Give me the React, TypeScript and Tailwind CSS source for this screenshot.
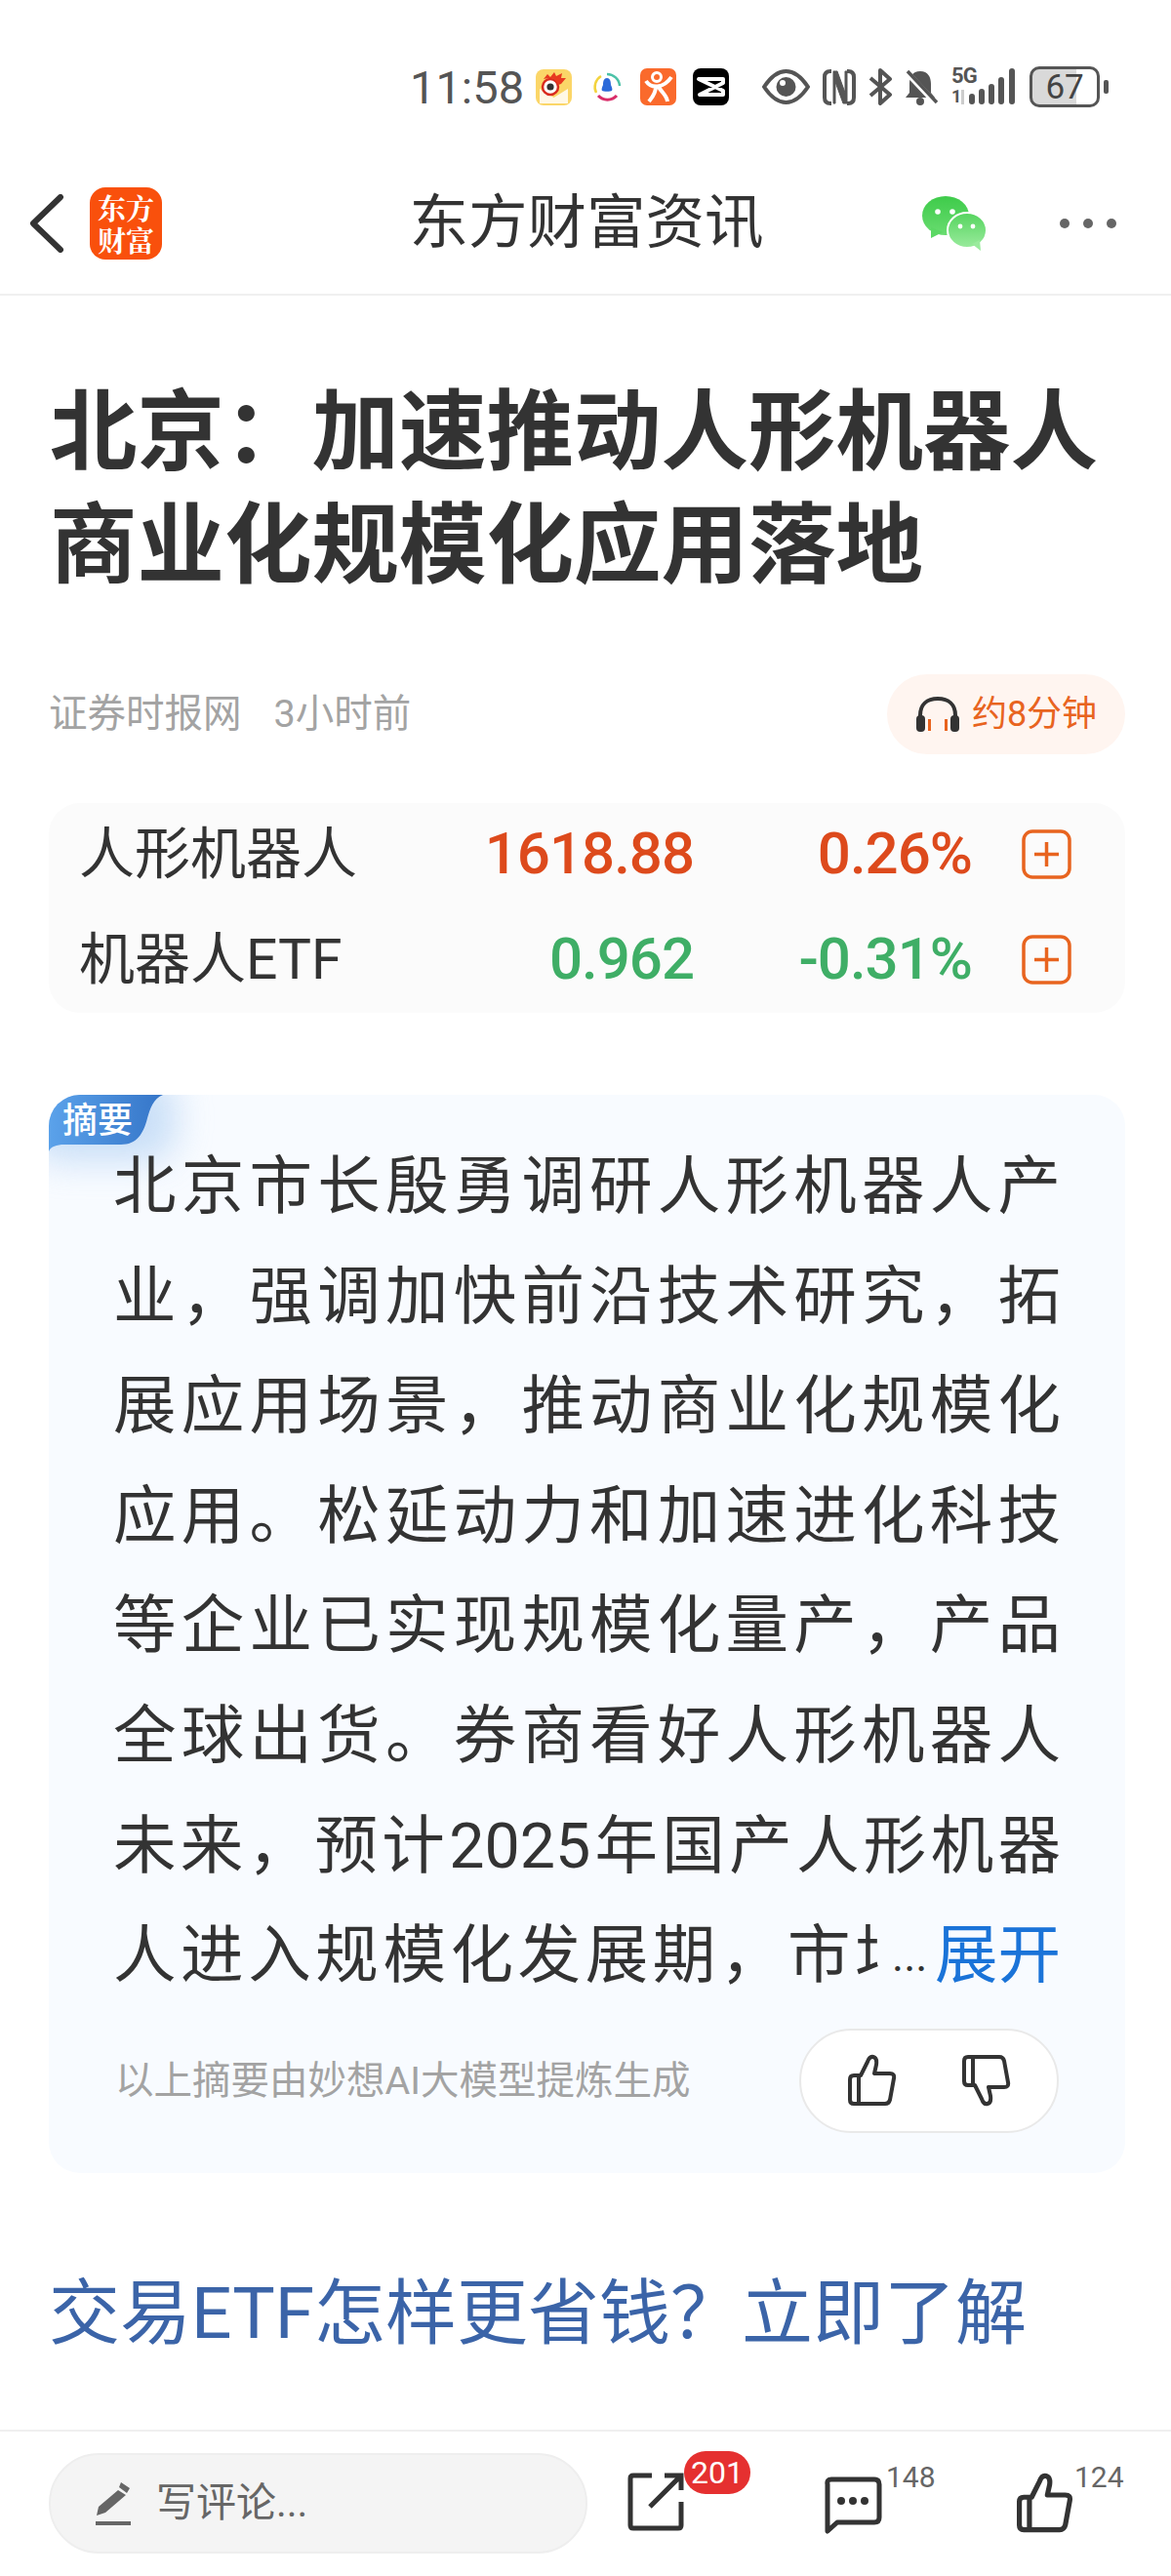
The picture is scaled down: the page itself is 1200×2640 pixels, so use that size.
import React from "react";

const Plus = () => (
  <svg width="51" height="51" viewBox="0 0 51 51" fill="none" className="shrink-0">
    <rect x="2" y="2" width="47" height="47" rx="9" stroke="#e8641f" strokeWidth="3.5" />
    <path d="M13 25.5H38M25.5 13V38" stroke="#e8641f" strokeWidth="3.5" />
  </svg>
);

const Thumb = ({ w, h, flip, sw = 4, color = "#333" }: { w: number; h: number; flip?: boolean; sw?: number; color?: string }) => (
  <svg width={w} height={h} viewBox="0 0 50 54" fill="none" className={flip ? "-scale-y-100" : ""}>
    <path
      d="M13 22 L20 8 Q22 2 26 3 Q30 4 29 11 L27 20 H43 Q48 20 47 25 L43 47 Q42 51 38 51 H6 Q2 51 2 47 V26 Q2 22 6 22 H13 Z M11 22 V51"
      stroke={color}
      strokeWidth={sw}
      strokeLinejoin="round"
    />
  </svg>
);

const StockRow = ({ name, price, pct, color }: { name: string; price: string; pct: string; color: string }) => (
  <div className="flex h-[104px] items-center">
    <div className="w-[300px] pl-[31px] text-[57px] leading-none whitespace-nowrap text-[#333]">{name}</div>
    <div className={`w-[361px] text-right text-[60px] leading-none font-medium tracking-[-1px] ${color}`}>{price}</div>
    <div className={`w-[285px] text-right text-[60px] leading-none font-medium tracking-[-1px] ${color}`}>{pct}</div>
    <div className="ml-[51px]"><Plus /></div>
  </div>
);

const StatusIcons = () => (
  <div className="flex items-center">
    <svg width="37" height="37" viewBox="0 0 37 37" className="ml-[12px]">
      <rect width="37" height="37" rx="8" fill="#fbd668" />
      <path d="M4 20L18.5 29L33 20V35H4Z" fill="#fff8e6" />
      <circle cx="15" cy="18" r="8" fill="#fff" stroke="#d92b1f" strokeWidth="2.5" />
      <circle cx="15" cy="18" r="3.6" fill="#333" />
      <path d="M8 10L12 5L15 8L19 3L21 7L27 4L26 9L31 9L26 15L23 16L19 10L13 9Z" fill="#e8391f" />
    </svg>
    <svg width="30" height="30" viewBox="0 0 30 30" fill="none" className="ml-[21px]">
      <path d="M9 4A13 13 0 0 0 4 21" stroke="#f3d33d" strokeWidth="2.5" />
      <path d="M15 2A13 13 0 0 1 28 14" stroke="#4cc2a8" strokeWidth="2.5" />
      <path d="M6 24A13 13 0 0 0 25 24" stroke="#d92e6a" strokeWidth="3" />
      <path d="M15 6C18 6 19 9 19 13C20 15 21 18 20 19C19 20 11 20 10 19C9 18 10 15 11 13C11 9 12 6 15 6Z" fill="#2b69d9" />
    </svg>
    <svg width="37" height="38" viewBox="0 0 37 38" fill="none" className="ml-[19px]">
      <rect width="37" height="38" rx="7" fill="#fa6a2c" />
      <circle cx="17" cy="9" r="4.5" stroke="#fff" strokeWidth="3" />
      <path d="M6 13C11 21 24 21 32 9M16 19C16 26 12 30 9 34M19 19C22 25 27 27 28 34" stroke="#fff" strokeWidth="4" />
    </svg>
    <svg width="37" height="38" viewBox="0 0 37 38" className="ml-[17px]">
      <rect width="37" height="38" rx="8" fill="#000" />
      <path d="M6 11H31V15L7 27H31V23L6 11Z" fill="none" stroke="#fff" strokeWidth="4" strokeLinejoin="round" />
    </svg>
    <svg width="49" height="36" viewBox="0 0 49 36" fill="none" className="ml-[34px]">
      <path d="M2 18C10 6 17 2 24.5 2C32 2 39 6 47 18C39 30 32 34 24.5 34C17 34 10 30 2 18Z" stroke="#555" strokeWidth="4" />
      <circle cx="24.5" cy="18" r="10" fill="#555" />
      <circle cx="21" cy="14" r="3" fill="#fff" />
    </svg>
    <svg width="34" height="37" viewBox="0 0 34 37" fill="none" className="ml-[13px]">
      <path d="M9 2H8Q2 2 2 8V29Q2 35 8 35H9M25 2H26Q32 2 32 8V29Q32 35 26 35H25" stroke="#555" strokeWidth="4" />
      <path d="M11 2H15L23 24V2H25V35H21L13 13V35H11Z" fill="#555" stroke="#555" strokeWidth="1" />
    </svg>
    <svg width="26" height="38" viewBox="0 0 26 38" fill="none" className="ml-[12px]">
      <path d="M3 10L23 27L13 36V2L23 11L3 28" stroke="#555" strokeWidth="4" strokeLinejoin="round" />
    </svg>
    <svg width="36" height="38" viewBox="0 0 36 38" className="ml-[10px]">
      <path d="M18 3C10 3 7 9 7 16V25L3 30H33L29 25V16C29 9 26 3 18 3Z" fill="#555" />
      <circle cx="18" cy="34" r="4" fill="#555" />
      <path d="M3 3L33 35" stroke="#fff" strokeWidth="6" />
      <path d="M5 3L35 35" stroke="#555" strokeWidth="3.5" />
    </svg>
    <div className="relative ml-[14px] h-[38px] w-[68px]">
      <span className="absolute top-[-3px] left-0 text-[22px] leading-[22px] font-bold tracking-[-1px] text-[#555]">5G</span>
      <span className="absolute top-[19px] left-0 text-[18px] leading-[20px] font-bold text-[#555]">1</span>
      <span className="absolute top-[22px] left-[10px] h-[15px] w-[3px] bg-[#ccc]" />
      <svg width="50" height="38" viewBox="0 0 50 38" fill="#555" className="absolute top-0 right-0">
        <rect x="0" y="26" width="6" height="11" rx="3" />
        <rect x="10" y="21" width="6" height="16" rx="3" />
        <rect x="20" y="16" width="6" height="21" rx="3" />
        <rect x="30" y="9" width="6" height="28" rx="3" />
        <rect x="41" y="0" width="6" height="37" rx="3" />
      </svg>
    </div>
    <div className="relative ml-[12px] flex h-[42px] w-[72px] items-center justify-center overflow-hidden rounded-[10px] border-[3px] border-[#555] bg-[linear-gradient(90deg,#d9d9d9_68%,#fff_68%)]">
      <span className="text-[35px] leading-none text-[#444]">67</span>
    </div>
    <div className="ml-[4px] h-[14px] w-[5px] rounded-[2px] bg-[#555]" />
  </div>
);

export default function App() {
  const lines = [
    "北京市长殷勇调研人形机器人产",
    "业，强调加快前沿技术研究，拓",
    "展应用场景，推动商业化规模化",
    "应用。松延动力和加速进化科技",
    "等企业已实现规模化量产，产品",
    "全球出货。券商看好人形机器人",
    "未来，预计2025年国产人形机器",
  ];
  return (
    <div className="flex h-[2640px] w-[1200px] flex-col overflow-hidden bg-white text-[#333] [font-family:Roboto,'Noto_Sans_CJK_SC',sans-serif]">
      <div className="flex h-[178px] shrink-0 items-center pl-[420px]">
        <span className="text-[47px] leading-none text-[#555]">11:58</span>
        <StatusIcons />
      </div>

      <header className="relative flex h-[125px] shrink-0 items-start border-b-[2px] border-[#f0f0f0] pl-[30px]">
        <div className="flex h-[102px] w-full items-center">
          <svg width="36" height="60" viewBox="0 0 36 60" fill="none">
            <path d="M32 3L4 30L32 57" stroke="#333" strokeWidth="6" strokeLinecap="round" strokeLinejoin="round" />
          </svg>
          <div className="ml-[26px] flex h-[74px] w-[74px] flex-col items-center justify-center rounded-[16px] bg-[#f9500c] text-[29px] leading-[33px] font-bold text-white [font-family:'Noto_Serif_CJK_SC','Noto_Sans_CJK_SC',serif]">
            <span>东方</span>
            <span>财富</span>
          </div>
          <h1 className="ml-[253px] w-[364px] text-center text-[60.5px] leading-none font-normal whitespace-nowrap text-[#333]">东方财富资讯</h1>
          <svg width="68" height="58" viewBox="0 0 68 58" className="ml-[161px]">
            <defs>
              <linearGradient id="wa" x1="0" y1="0" x2="0" y2="1"><stop offset="0" stopColor="#3ecb4a" /><stop offset="1" stopColor="#69dc70" /></linearGradient>
              <linearGradient id="wb" x1="0" y1="0" x2="0" y2="1"><stop offset="0" stopColor="#55d45e" /><stop offset="1" stopColor="#9aeb9d" /></linearGradient>
            </defs>
            <ellipse cx="25" cy="21" rx="24" ry="20" fill="url(#wa)" />
            <path d="M10 33L10 44L22 38Z" fill="#5bd864" />
            <ellipse cx="47" cy="36" rx="20" ry="18" fill="url(#wb)" stroke="#fff" strokeWidth="2" />
            <path d="M52 50L61 57L60 46Z" fill="#9aeb9d" />
            <circle cx="17" cy="17" r="2.8" fill="#fff" />
            <circle cx="32" cy="17" r="2.8" fill="#fff" />
            <circle cx="40" cy="32" r="2.4" fill="#fff" />
            <circle cx="53" cy="32" r="2.4" fill="#fff" />
          </svg>
          <div className="ml-[74px] flex gap-[14px]">
            <span className="h-[10px] w-[10px] rounded-full bg-[#666]" />
            <span className="h-[10px] w-[10px] rounded-full bg-[#666]" />
            <span className="h-[10px] w-[10px] rounded-full bg-[#666]" />
          </div>
        </div>
      </header>

      <main className="flex flex-1 flex-col">
        <div className="pt-[83px] pl-[51px] text-[89.5px] leading-[116px] font-bold whitespace-nowrap text-[#333]">
          <div>北京：加速推动人形机器人</div>
          <div>商业化规模化应用落地</div>
        </div>

        <div className="mt-[73px] flex h-[82px] items-center justify-between pr-[47px] pl-[50px]">
          <div className="flex gap-[33px] text-[39.5px] leading-none text-[#a3a3a3]">
            <span>证券时报网</span>
            <span>3小时前</span>
          </div>
          <div className="flex h-[82px] w-[244px] items-center justify-center gap-[12px] rounded-[41px] bg-[#fff5f0]">
            <svg width="46" height="38" viewBox="0 0 46 38" fill="none">
              <path d="M5 30V20C5 9 12 3 23 3C34 3 41 9 41 20V30" stroke="#333" strokeWidth="4" />
              <rect x="1" y="20" width="9" height="17" rx="4" fill="#333" />
              <rect x="36" y="20" width="9" height="17" rx="4" fill="#333" />
              <rect x="13" y="24" width="3" height="12" fill="#e8641f" />
              <rect x="30" y="24" width="3" height="12" fill="#e8641f" />
            </svg>
            <span className="text-[36px] leading-none text-[#e8641f]">约8分钟</span>
          </div>
        </div>

        <div className="mx-[50px] mt-[50px] h-[215px] w-[1103px] rounded-[32px] bg-[#fbfbfb]">
          <div className="flex flex-col gap-[4px]">
            <StockRow name="人形机器人" price="1618.88" pct="0.26%" color="text-[#dd4a1c]" />
            <StockRow name="机器人ETF" price="0.962" pct="-0.31%" color="text-[#3fae66]" />
          </div>
        </div>

        <section className="relative mx-[50px] mt-[84px] w-[1103px] overflow-hidden rounded-[32px] bg-[#f8fbff] pt-[38px] pr-[66px] pb-[41px] pl-[66px]">
          <div className="absolute top-[-20px] left-[-20px] h-[88px] w-[150px] rounded-[30px] bg-[#a9ccf2] opacity-60 blur-[18px]" />
          <svg width="118" height="58" viewBox="0 0 118 58" className="absolute top-0 left-0">
            <defs>
              <linearGradient id="tag" x1="0" y1="0" x2="1" y2="0"><stop offset="0" stopColor="#5ba2ea" /><stop offset="1" stopColor="#3575c8" /></linearGradient>
            </defs>
            <path d="M0 30C0 12 12 0 30 0H117C107 4 104 14 101 24C97 40 90 51 74 51H16C8 51 2 53 0 58Z" fill="url(#tag)" />
          </svg>
          <span className="absolute top-[7px] left-[14px] text-[36px] leading-[40px] font-medium text-white">摘要</span>

          <div className="relative text-[64.5px] leading-[112.6px] text-[#333]">
            {lines.map((l) => (
              <div key={l} className="whitespace-nowrap [text-align-last:justify]">{l}</div>
            ))}
            <div className="flex items-center whitespace-nowrap">
              <div className="w-[784px] overflow-hidden tracking-[4.6px]">人进入规模化发展期，市场</div>
              <span className="ml-[14px] w-[38px] text-[46px] leading-none">...</span>
              <span className="ml-auto text-[#1a73d8]">展开</span>
            </div>
          </div>

          <div className="relative mt-[18px] flex items-center justify-between pl-[2px] pr-[2px]">
            <span className="text-[39.5px] leading-none whitespace-nowrap text-[#a3a3a3]">以上摘要由妙想AI大模型提炼生成</span>
            <div className="flex h-[107px] w-[266px] shrink-0 items-center justify-center gap-[67px] rounded-[54px] border-[2px] border-[#e9e9e9] bg-white">
              <Thumb w={50} h={54} />
              <Thumb w={50} h={54} flip />
            </div>
          </div>
        </section>

        <div className="mt-[94px] px-[50px] text-[73px] leading-[100px] whitespace-nowrap text-[#3b64a8]">交易ETF怎样更省钱？立即了解</div>
      </main>

      <footer className="flex h-[150px] shrink-0 items-start border-t-[2px] border-[#efefef] pt-[22px] pl-[50px]">
        <div className="flex h-[103px] w-[552px] items-center rounded-[52px] border-[2px] border-[#eeeeee] bg-[#f4f4f4] pl-[46px]">
          <svg width="36" height="46" viewBox="0 0 36 46" fill="#666">
            <path d="M26 1L35 7L32 12L24 6ZM23 9L31 14L10 32L1 35L3 26Z" />
            <rect x="0" y="41" width="36" height="4" />
          </svg>
          <span className="ml-[26px] text-[41px] leading-none text-[#666]">写评论...</span>
        </div>
        <div className="relative mt-[20px] ml-[41px] h-[60px] w-[58px]">
          <svg width="58" height="60" viewBox="0 0 58 60" fill="none">
            <path d="M25 3H6Q3 3 3 6V54Q3 57 6 57H52Q55 57 55 54V30" stroke="#333" strokeWidth="5" />
            <path d="M23 35L55 3M38 3H55V18" stroke="#333" strokeWidth="5" />
          </svg>
          <span className="absolute top-[-22px] left-[58px] flex h-[44px] w-[68px] items-center justify-center rounded-[22px] bg-[#e53030] text-[32px] leading-none text-white">201</span>
        </div>
        <div className="relative mt-[24px] ml-[143px] h-[60px] w-[60px]">
          <svg width="60" height="60" viewBox="0 0 60 60" fill="none">
            <path d="M8 3H52Q57 3 57 8V42Q57 47 52 47H14L4 56V8Q3 3 8 3Z" stroke="#333" strokeWidth="5" strokeLinejoin="round" />
            <circle cx="18" cy="25" r="4" fill="#333" />
            <circle cx="30" cy="25" r="4" fill="#333" />
            <circle cx="42" cy="25" r="4" fill="#333" />
          </svg>
          <span className="absolute top-[-14px] left-[64px] text-[30px] leading-none text-[#666]">148</span>
        </div>
        <div className="relative mt-[20px] ml-[136px] h-[62px] w-[62px]">
          <Thumb w={62} h={62} sw={4.5} />
          <span className="absolute top-[-10px] left-[61px] text-[30px] leading-none text-[#666]">124</span>
        </div>
      </footer>
    </div>
  );
}
